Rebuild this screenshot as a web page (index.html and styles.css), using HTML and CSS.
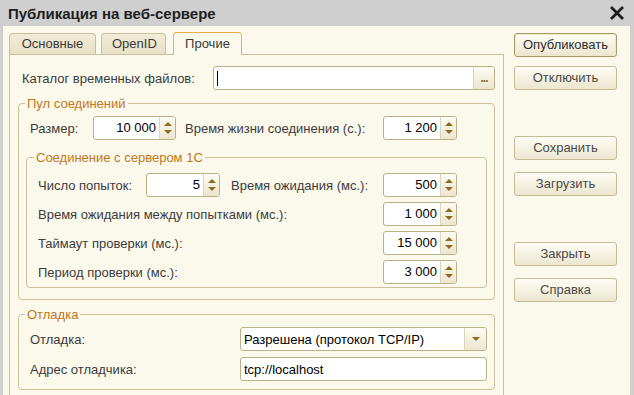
FILE: index.html
```html
<html lang="ru">

<head>
  <meta charset="UTF-8">
  <meta name="viewport" content="width=device-width, initial-scale=1.0">
  <title>Публикация на веб-сервере</title>
  <link rel="stylesheet" href="styles.css">
</head>

<body>
  <div class="window">
    <div class="titlebar">
      <span class="title">Публикация на веб-сервере</span>
      <svg class="close" width="14" height="14" viewBox="0 0 14 14">
        <path d="M2 2 L12 12 M12 2 L2 12" stroke="#1e1e1e" stroke-width="2.8" stroke-linecap="square" />
      </svg>
    </div>

    <div class="client">
      <div class="main">
        <div class="tabs">
          <div class="tab">Основные</div>
          <div class="tab">OpenID</div>
          <div class="tab active">Прочие</div>
        </div>

        <div class="page">
          <div class="row catalog">
            <span class="lbl w-catalog">Каталог временных файлов:</span>
            <div class="input wide">
              <span class="text"><span class="caret"></span></span>
              <span class="dots">...</span>
            </div>
          </div>

          <fieldset class="group pool">
            <legend>Пул соединений</legend>
            <div class="row first">
              <span class="lbl w-size">Размер:</span>
              <div class="spin w83"><span class="val">10 000</span><span class="arrows"><i class="up"></i><i class="down"></i></span></div>
              <span class="lbl w-life">Время жизни соединения (с.):</span>
              <div class="spin"><span class="val">1 200</span><span class="arrows"><i class="up"></i><i class="down"></i></span></div>
            </div>

            <fieldset class="group inner">
              <legend>Соединение с сервером 1С</legend>
              <div class="row first">
                <span class="lbl w-tries">Число попыток:</span>
                <div class="spin"><span class="val">5</span><span class="arrows"><i class="up"></i><i class="down"></i></span></div>
                <span class="lbl w-wait">Время ожидания (мс.):</span>
                <div class="spin"><span class="val">500</span><span class="arrows"><i class="up"></i><i class="down"></i></span></div>
              </div>
              <div class="row">
                <span class="lbl w-long">Время ожидания между попытками (мс.):</span>
                <div class="spin"><span class="val">1 000</span><span class="arrows"><i class="up"></i><i class="down"></i></span></div>
              </div>
              <div class="row">
                <span class="lbl w-long">Таймаут проверки (мс.):</span>
                <div class="spin"><span class="val">15 000</span><span class="arrows"><i class="up"></i><i class="down"></i></span></div>
              </div>
              <div class="row">
                <span class="lbl w-long">Период проверки (мс.):</span>
                <div class="spin"><span class="val">3 000</span><span class="arrows"><i class="up"></i><i class="down"></i></span></div>
              </div>
            </fieldset>
          </fieldset>

          <fieldset class="group debug">
            <legend>Отладка</legend>
            <div class="row first">
              <span class="lbl w-debug">Отладка:</span>
              <div class="input field">
                <span class="text">Разрешена (протокол TCP/IP)</span>
                <span class="drop"><i class="down"></i></span>
              </div>
            </div>
            <div class="row">
              <span class="lbl w-debug">Адрес отладчика:</span>
              <div class="input field">
                <span class="text">tcp://localhost</span>
              </div>
            </div>
          </fieldset>
        </div>
      </div>

      <div class="buttons">
        <div class="btn-group first-group">
          <div class="btn default">Опубликовать</div>
          <div class="btn">Отключить</div>
        </div>
        <div class="btn-group">
          <div class="btn">Сохранить</div>
          <div class="btn">Загрузить</div>
        </div>
        <div class="btn-group">
          <div class="btn">Закрыть</div>
          <div class="btn">Справка</div>
        </div>
      </div>
    </div>
  </div>
</body>

</html>
```

FILE: styles.css
```css
body {
  margin: 0;
  background-color: #cfcfcf;
  font-family: "Liberation Sans", Arial, sans-serif;
  font-size: 13px;
  color: #3c3c3c;
  overflow: hidden;
}

.window {
  width: 634px;
  height: 395px;
  display: flex;
  flex-direction: column;
  overflow: hidden;
}

.titlebar {
  height: 26px;
  flex: none;
  display: flex;
  align-items: center;
  justify-content: space-between;
  padding: 0 10px 0 8px;
  background-color: #cfcfcf;
}

.title {
  font-size: 15px;
  font-weight: bold;
  color: #1e1e1e;
}

.client {
  flex: 1;
  display: flex;
  gap: 10px;
  margin: 0 4px 0 3px;
  padding: 6px 0 0 6px;
  background-color: #fbf9ec;
  min-height: 0;
}

/* tabs */

.main {
  width: 495px;
  display: flex;
  flex-direction: column;
}

.tabs {
  display: flex;
  align-items: flex-end;
  height: 22px;
  position: relative;
  z-index: 1;
}

.tab {
  height: 20px;
  line-height: 20px;
  padding: 0 10px;
  margin-right: 5px;
  border: 1px solid #cbc09c;
  border-bottom: none;
  border-radius: 4px 4px 0 0;
  background: linear-gradient(#f1ecd8, #e8e1c6);
  color: #3a3a3a;
  text-align: center;
}

.tab:nth-child(1) {
  width: 65px;
}

.tab:nth-child(2) {
  width: 43px;
}

.tab.active {
  height: 22px;
  line-height: 22px;
  width: 47px;
  margin-left: 2px;
  margin-bottom: -1px;
  background: #fbf9ec;
  border-color: #d6b874;
  border-top: 1px solid #e3ad4c;
}

.page {
  flex: 1;
  border: 1px solid #cbc09c;
  padding: 11px 8px 20px 8px;
}

/* rows */

.row {
  display: flex;
  align-items: center;
  height: 24px;
  margin-top: 5px;
  white-space: nowrap;
}

.row.first {
  margin-top: 5px;
}

.catalog {
  margin-top: 0;
  padding-left: 4px;
}

.lbl {
  flex: none;
}

.w-catalog { width: 191px; }
.w-size { width: 63px; }
.w-life { width: 198px; margin-left: 9px; }
.w-tries { width: 108px; }
.w-wait { width: 152px; margin-left: 11px; }
.w-long { width: 345px; }
.w-debug { width: 210px; }

/* groups */

.group {
  margin: 0;
  min-width: 0;
  border: 1px solid #cbc09c;
  border-radius: 4px;
  padding: 0 7px 11px 7px;
}

.group legend {
  padding: 0 2px;
  margin-left: -1px;
  line-height: 15px;
  color: #c0771c;
}

.pool {
  margin-top: 6px;
}

.pool > .row {
  padding-left: 4px;
}

.inner {
  margin-top: 10px;
  padding: 0 8px 3px 8px;
}

.inner .row {
  padding-left: 3px;
}

.inner .row.first {
  margin-top: 8px;
}

.debug {
  margin-top: 7px;
  padding-bottom: 8px;
}

.debug .row {
  padding-left: 4px;
  margin-top: 6px;
}

.debug .row.first {
  margin-top: 5px;
}

/* inputs */

.input,
.spin {
  box-sizing: border-box;
  height: 24px;
  display: flex;
  border: 1px solid #bcb089;
  border-radius: 3px;
  background-color: #fff;
  overflow: hidden;
  color: #000;
}

.input .text {
  flex: 1;
  padding-left: 3px;
  display: flex;
  align-items: center;
}

.wide {
  width: 282px;
}

.field {
  width: 248px;
}

.caret {
  width: 1px;
  height: 15px;
  background-color: #000;
}

.dots,
.drop {
  width: 21px;
  border-left: 1px solid #ddd5b8;
  background: linear-gradient(#fdfbf3, #ece6cf);
  display: flex;
  align-items: center;
  justify-content: center;
}

.dots {
  color: #8a6d2a;
  font-size: 12px;
  font-weight: bold;
  line-height: 16px;
  letter-spacing: -1px;
  align-items: flex-end;
  padding-bottom: 3px;
  box-sizing: border-box;
}

.spin {
  width: 74px;
}

.spin.w83 {
  width: 83px;
}

.spin .val {
  flex: 1;
  text-align: right;
  padding-right: 3px;
  line-height: 22px;
}

.spin .arrows {
  width: 15px;
  border-left: 1px solid #ddd5b8;
  background: linear-gradient(#fdfbf3, #ece6cf);
  display: flex;
  flex-direction: column;
  align-items: center;
  justify-content: center;
  gap: 4px;
}

.up,
.down {
  display: block;
  width: 0;
  height: 0;
  border-left: 4px solid transparent;
  border-right: 4px solid transparent;
}

.up {
  border-bottom: 4px solid #8d6c22;
}

.down {
  border-top: 4px solid #8d6c22;
}

/* buttons */

.buttons {
  width: 103px;
  display: flex;
  flex-direction: column;
  gap: 46px;
  padding-top: 1px;
}

.btn-group {
  display: flex;
  flex-direction: column;
  gap: 12px;
}

.btn-group.first-group {
  gap: 9px;
}

.btn {
  box-sizing: border-box;
  height: 24px;
  line-height: 22px;
  text-align: center;
  border: 1px solid #c6bb95;
  border-radius: 3px;
  background: linear-gradient(#fefdf6, #ece6cf);
  color: #4a4a4a;
}

.btn.default {
  border-color: #a99b6c;
  color: #2e2e2e;
  box-shadow: inset 0 0 0 1px #efe7c9;
}
```
